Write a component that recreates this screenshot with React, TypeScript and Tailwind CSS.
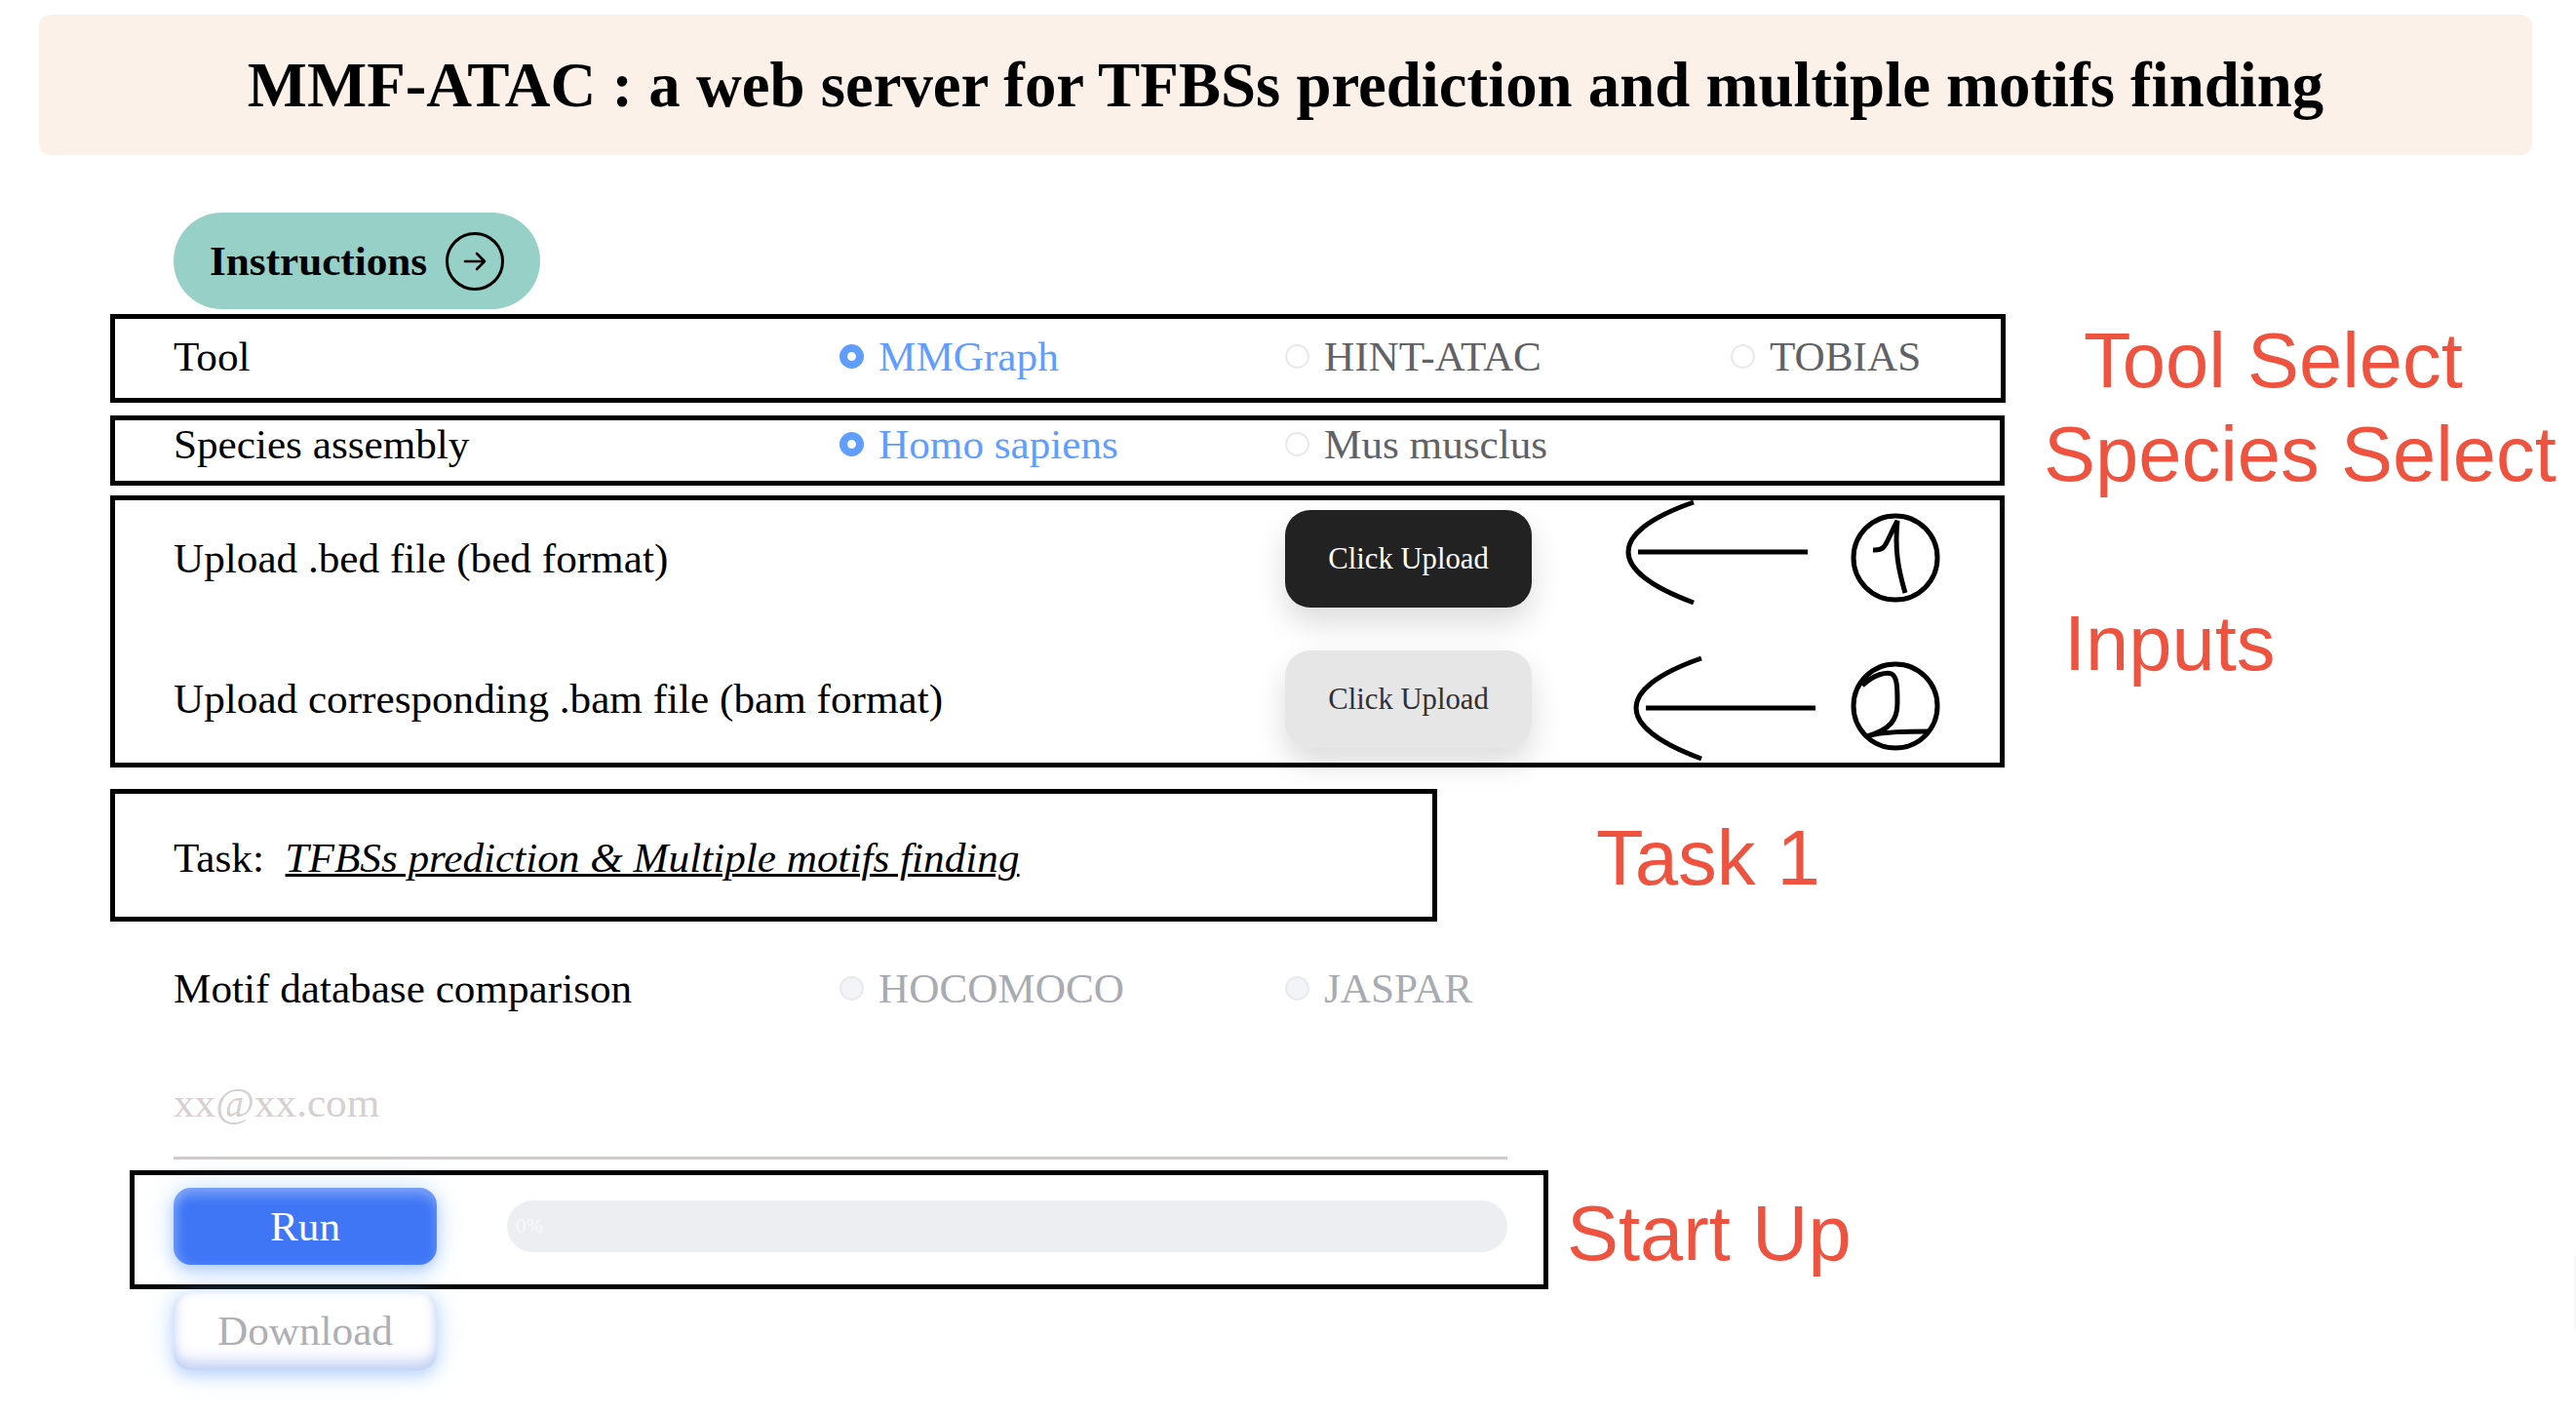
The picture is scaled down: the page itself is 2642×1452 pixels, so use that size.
const serif = "font-['Liberation_Serif','Times_New_Roman',serif]"

function Radio({ label, checked, disabled }: { label: string; checked?: boolean; disabled?: boolean }) {
  let dot = "border-2 border-[#e8e9ed] bg-white"
  let text = "text-[#606266]"
  if (checked) {
    dot = "border-[8px] border-[#5f9dff] bg-white"
    text = "text-[#5f9dff]"
  }
  if (disabled) {
    dot = "border-2 border-[#e8e9ed] bg-[#f3f4f8]"
    text = "text-[#a8abb2]"
  }
  return (
    <div className="flex items-center gap-[15px]">
      <span className={`h-[25px] w-[25px] rounded-full ${dot}`} />
      <span className={text}>{label}</span>
    </div>
  )
}

function UploadRow({ label, dark }: { label: string; dark?: boolean }) {
  return (
    <div className="flex h-[100px] items-center">
      <div className="w-[1140px]">{label}</div>
      <button
        className={`h-[100px] w-[253px] rounded-[26px] text-[30.7px] shadow-[0_16px_32px_rgba(0,0,0,0.14)] ${
          dark ? "bg-[#222222] text-white" : "bg-[#e6e6e6] text-[#303133]"
        }`}
      >
        Click Upload
      </button>
    </div>
  )
}

function Annotation({ text, className }: { text: string; className: string }) {
  return (
    <div className={`absolute whitespace-nowrap font-['Liberation_Sans',Arial,sans-serif] text-[79.5px] leading-none text-[#ee5340] ${className}`}>
      {text}
    </div>
  )
}

function HandArrow({ className }: { className: string }) {
  return (
    <svg className={`absolute ${className}`} width="196" height="112" viewBox="0 0 196 112" fill="none" stroke="#000" strokeWidth="5">
      <path d="M74 4C28 20 7 38 7 55C7 72 28 90 74 107" />
      <path d="M17 55H191" />
    </svg>
  )
}

// hand drawn numbers on top of the form
function HandNumber({ className, d }: { className: string; d: string }) {
  return (
    <svg className={`absolute ${className}`} width="94" height="96" viewBox="0 0 94 96" fill="none" stroke="#000" strokeWidth="5">
      <circle cx="47" cy="48" r="43" />
      <path d={d} />
    </svg>
  )
}

export default function App() {
  return (
    <div className={`relative h-[1452px] w-[2642px] overflow-hidden bg-white text-[43.2px] leading-none text-black ${serif}`}>
      <header className="mx-[40px] mt-[15px] flex h-[144px] w-[2557px] items-center justify-center rounded-[12px] bg-[#fcf1e9]">
        <h1 className="text-[64.8px] font-bold">MMF-ATAC : a web server for TFBSs prediction and multiple motifs finding</h1>
      </header>

      <main className="pl-[113px]">
        <button className="ml-[65px] mt-[59px] flex h-[99px] w-[376px] items-center gap-[19px] rounded-full bg-[#96d0c6] pl-[37px] font-bold">
          Instructions
          <span className="flex h-[60px] w-[60px] items-center justify-center rounded-full border-[3px] border-black">
            <svg width="24" height="20" viewBox="0 0 24 20" fill="none" stroke="#000" strokeWidth="2.6" strokeLinecap="round" strokeLinejoin="round">
              <path d="M2 10H22M14 2L22 10L14 18" />
            </svg>
          </span>
        </button>

        <section className="mt-[5px] grid h-[91px] w-[1944px] grid-cols-[683px_457px_457px_auto] items-center border-[5px] border-black pb-[3px] pl-[60px]">
          <div>Tool</div>
          <Radio label="MMGraph" checked />
          <Radio label="HINT-ATAC" />
          <Radio label="TOBIAS" />
        </section>

        <section className="mt-[13px] grid h-[72px] w-[1943px] grid-cols-[683px_457px_auto] items-center border-[5px] border-black pb-[12px] pl-[60px]">
          <div>Species assembly</div>
          <Radio label="Homo sapiens" checked />
          <Radio label="Mus musclus" />
        </section>

        <section className="mt-[10px] flex h-[279px] w-[1943px] flex-col gap-[44px] border-[5px] border-black pl-[60px] pt-[10px]">
          <UploadRow label="Upload .bed file (bed format)" dark />
          <UploadRow label="Upload corresponding .bam file (bam format)" />
        </section>

        <section className="mt-[22px] flex h-[136px] w-[1361px] items-center border-[5px] border-black pl-[60px] pt-[6px]">
          Task:&nbsp;&nbsp;<span className="italic underline decoration-[3px]">TFBSs prediction &amp; Multiple motifs finding</span>
        </section>

        <section className="ml-[65px] mt-[47px] grid h-[44px] grid-cols-[683px_457px_auto] items-center">
          <div>Motif database comparison</div>
          <Radio label="HOCOMOCO" disabled />
          <Radio label="JASPAR" disabled />
        </section>

        <div className="ml-[65px] mt-[73px] h-[80px] w-[1368px] border-b-[3px] border-[#cfcbcb] text-[#d6d0d0]">xx@xx.com</div>

        <section className="ml-[20px] mt-[11px] flex h-[122px] w-[1455px] items-center border-[5px] border-black pb-[7px] pl-[40px]">
          <button className="h-[79px] w-[270px] rounded-[18px] bg-[#3e76f6] text-white shadow-[inset_0_8px_12px_rgba(255,255,255,0.28),inset_6px_0_10px_rgba(255,255,255,0.12),0_6px_14px_rgba(64,120,246,0.3),0_0_30px_rgba(120,190,255,0.35)]">
            Run
          </button>
          <div className="ml-[72px] flex h-[53px] w-[1026px] items-center rounded-full bg-[#edeef2] pl-[9px] text-[21px] text-[#f8f9fb]">0%</div>
        </section>

        <button className="ml-[65px] mt-[3px] h-[80px] w-[270px] rounded-[18px] bg-white text-[#aeafb5] shadow-[inset_0_-10px_14px_rgba(150,175,235,0.5),inset_0_0_10px_rgba(170,190,240,0.3),0_6px_14px_rgba(100,150,246,0.3),0_0_30px_rgba(120,190,255,0.35)]">
          Download
        </button>
      </main>

      <HandArrow className="left-[1663px] top-[511px]" />
      <HandArrow className="left-[1671px] top-[671px]" />
      <HandNumber className="left-[1897px] top-[524px]" d="M24 40C38 41 36 34 49 10C46 40 50 60 57 84" />
      <HandNumber className="left-[1897px] top-[676px]" d="M13 27C25 15 38 13 43 15C49 18 49 30 49 45C49 62 42 72 18 79C35 74 60 74 82 74" />

      <Annotation text="Tool Select" className="left-[2137px] top-[330px]" />
      <Annotation text="Species Select" className="left-[2096px] top-[426px]" />
      <Annotation text="Inputs" className="left-[2117px] top-[620px]" />
      <Annotation text="Task 1" className="left-[1637px] top-[840px]" />
      <Annotation text="Start Up" className="left-[1607px] top-[1225px]" />

      <div className="absolute right-0 top-[1287px] h-[76px] w-[2px] bg-[#f8f8f8]" />
    </div>
  )
}
